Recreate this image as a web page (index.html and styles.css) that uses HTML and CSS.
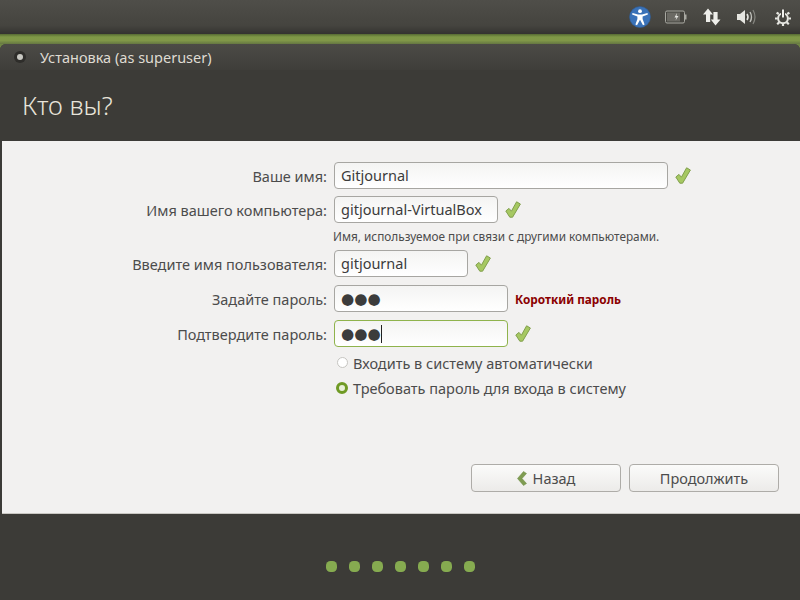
FILE: index.html
```html
<!DOCTYPE html>
<html lang="ru">
<head>
  <meta charset="UTF-8">
  <title>Установка</title>
  <link rel="stylesheet" href="styles.css">
</head>
<body>
  <div class="panel">
    <svg class="tray-icon" width="24" height="24" viewBox="0 0 24 24">
      <circle cx="12" cy="12" r="10.5" fill="#3a72b8" stroke="#2f5a92" stroke-width="0.6"/>
      <circle cx="12" cy="6.2" r="1.9" fill="#fff"/>
      <path d="M4.5 8 L10 9.6 H14 L19.5 8 L19.9 9.4 L14.6 11.4 V14 L16.6 19.6 L15 20.2 L12 14.8 L9 20.2 L7.4 19.6 L9.4 14 V11.4 L4.1 9.4Z" fill="#fff"/>
    </svg>
    <svg class="tray-icon" width="22" height="14" viewBox="0 0 22 14">
      <rect x="0.5" y="1" width="19" height="12" rx="1.5" fill="#45443f" stroke="#a9a9a2"/>
      <rect x="20" y="4.5" width="1.5" height="5" fill="#a9a9a2"/>
      <rect x="2" y="2.5" width="13" height="9" fill="#6b6a64"/>
      <path d="M12 3 L9.5 7.5 H11.5 L10.5 10.5 L13.5 6 H11.5Z" fill="#e8e8e4"/>
    </svg>
    <svg class="tray-icon" width="18" height="18" viewBox="0 0 18 18">
      <path d="M5 0.5 L10 6.5 H7.2 V14 H3 V6.5 H0Z M12.5 17.5 L7.8 11.5 H10.4 V4 H14.6 V11.5 H17.5Z" fill="#eeeeea"/>
    </svg>
    <svg class="tray-icon" width="20" height="16" viewBox="0 0 20 16">
      <path d="M0 5 H3 L8 1 V15 L3 11 H0Z" fill="#e6e6e1"/>
      <path d="M10 5 Q12 8 10 11" fill="none" stroke="#e2e2dd" stroke-width="1.6"/>
      <path d="M13 3 Q16 8 13 13" fill="none" stroke="#c0c0ba" stroke-width="1.4"/>
      <path d="M16 1 Q20 8 16 15" fill="none" stroke="#85857f" stroke-width="1.2"/>
    </svg>
    <svg class="tray-icon" width="16" height="17" viewBox="0 0 16 17">
      <path d="M1.6 3.6 L3.8 5 M14.4 3.6 L12.2 5 M0 9.5 H2.6 M16 9.5 H13.4 M2.2 15.2 L4.2 13.4 M13.8 15.2 L11.8 13.4 M8 17 V14.6" stroke="#e6e6e1" stroke-width="2.2"/>
      <circle cx="8" cy="9.3" r="4.9" fill="none" stroke="#e6e6e1" stroke-width="2"/>
      <path d="M8 0.5 V8.5" stroke="#42413d" stroke-width="4"/>
      <path d="M8 0.5 V8.5" stroke="#f0f0ec" stroke-width="2"/>
    </svg>
  </div>
  <div class="wallpaper"></div>

  <div class="window">
    <div class="titlebar">
      <span class="title-dot"></span>
      <span class="title-text">Установка (as superuser)</span>
    </div>
    <div class="page-head">
      <h1>Кто вы?</h1>
    </div>
    <div class="content">
      <div class="form">
        <label>Ваше имя:</label>
        <div class="field-row">
          <div class="input input-name">Gitjournal</div>
          <svg class="check" viewBox="0 0 16 17"><use href="#tick"/></svg>
        </div>

        <label>Имя вашего компьютера:</label>
        <div class="field-row">
          <div class="input input-host">gitjournal-VirtualBox</div>
          <svg class="check" viewBox="0 0 16 17"><use href="#tick"/></svg>
        </div>

        <span></span>
        <p class="hint">Имя, используемое при связи с другими компьютерами.</p>

        <label>Введите имя пользователя:</label>
        <div class="field-row">
          <div class="input input-user">gitjournal</div>
          <svg class="check" viewBox="0 0 16 17"><use href="#tick"/></svg>
        </div>

        <label class="pass-label">Задайте пароль:</label>
        <div class="field-row pass-row">
          <div class="input input-pass"><span class="dots">●●●</span></div>
          <span class="warn">Короткий пароль</span>
        </div>

        <label class="pass-label">Подтвердите пароль:</label>
        <div class="field-row pass-row">
          <div class="input input-pass focused"><span class="dots">●●●</span><span class="caret"></span></div>
          <svg class="check" viewBox="0 0 16 17"><use href="#tick"/></svg>
        </div>

        <span></span>
        <div class="radios">
          <div class="radio-row"><span class="radio"></span>Входить в систему автоматически</div>
          <div class="radio-row"><span class="radio on"></span>Требовать пароль для входа в систему</div>
        </div>
      </div>

      <div class="buttons">
        <div class="btn">
          <svg class="chevron" width="10" height="15" viewBox="0 0 10 15"><path d="M6.5 0.5 L9.5 2.5 L5 7.5 L9.5 12.5 L6.5 14.5 L0.5 7.5Z" fill="#7f9c52" stroke="#6b8a40" stroke-width="0.5"/></svg>
          Назад
        </div>
        <div class="btn">Продолжить</div>
      </div>
    </div>
    <div class="footer">
      <span class="step"></span><span class="step"></span><span class="step"></span><span class="step"></span><span class="step"></span><span class="step"></span><span class="step"></span>
    </div>
  </div>

  <svg width="0" height="0" class="defs">
    <symbol id="tick" viewBox="0 0 16 17">
      <path d="M0.8 10 L4 7.4 L6.4 10.2 L11.6 0.8 L15.4 3 L7.6 16.2 L4.8 16.2Z" fill="#a6c862" stroke="#819f4c" stroke-width="1"/>
    </symbol>
  </svg>
</body>
</html>
```

FILE: styles.css
```css
html, body {
  margin: 0;
  height: 100%;
}

body {
  width: 800px;
  height: 600px;
  overflow: hidden;
  display: flex;
  flex-direction: column;
  font-family: "Noto Sans", "Open Sans", sans-serif;
  font-size: 14.5px;
  color: #4c4c4c;
  background: #6f8544;
}

.defs {
  display: block;
  height: 0;
}

.panel {
  height: 34px;
  flex: none;
  display: flex;
  align-items: center;
  justify-content: flex-end;
  background: linear-gradient(#4f4e49, #45443f 75%, #343330);
}

.tray-icon {
  display: block;
}

.tray-icon:nth-child(1) { margin-right: 13px; }
.tray-icon:nth-child(2) { margin-right: 16px; }
.tray-icon:nth-child(3) { margin-right: 16px; }
.tray-icon:nth-child(4) { margin-right: 18px; }
.tray-icon:nth-child(5) { margin-right: 9px; }

.wallpaper {
  height: 10px;
  flex: none;
  background: linear-gradient(#566a33, #7f9847 30%, #809748 65%, #657742);
}

.window {
  flex: 1;
  display: flex;
  flex-direction: column;
  min-height: 0;
  border-radius: 6px 6px 0 0;
  overflow: hidden;
  background: #3c3b37;
}

.titlebar {
  height: 26px;
  flex: none;
  display: flex;
  align-items: center;
  padding-left: 17px;
  background: linear-gradient(#4c4b46, #3f3e3a);
  color: #dfdbd2;
}

.title-dot {
  width: 6px;
  height: 6px;
  border-radius: 50%;
  background: #c8c8c2;
  box-shadow: 0 0 0 3px #2e2d2a;
  margin-right: 17px;
}

.page-head {
  height: 71px;
  flex: none;
  display: flex;
  align-items: center;
  padding-left: 22px;
  background: #3c3b37;
}

.page-head h1 {
  margin: 0;
  font-size: 25.7px;
  font-weight: 300;
  color: #e8e4da;
}

.content {
  height: 373px;
  flex: none;
  margin-left: 2px;
  box-sizing: border-box;
  padding-top: 21px;
  background: #f2f1f0;
  border-bottom: 1px solid #c9c7c2;
  position: relative;
}

.form {
  display: grid;
  grid-template-columns: 325px 1fr;
  column-gap: 7px;
  row-gap: 7px;
  align-items: center;
}

.form label {
  text-align: right;
}

.pass-label,
.pass-row {
  margin-top: 1px;
}

.field-row {
  display: flex;
  align-items: center;
}

.input {
  box-sizing: border-box;
  height: 27px;
  line-height: 25px;
  padding-left: 6px;
  background: linear-gradient(#f4f4f3, #ffffff);
  border: 1px solid #a7a6a2;
  border-radius: 4px;
  color: #3c3c3c;
  white-space: nowrap;
}

.input-name { width: 334px; }
.input-host { width: 164px; }
.input-user { width: 134px; }
.input-pass { width: 174px; }

.input.focused {
  border-color: #8fb34c;
}

.dots {
  font-family: "DejaVu Sans", sans-serif;
  font-size: 15.2px;
  color: #3c3c3c;
}

.caret {
  display: inline-block;
  width: 1px;
  height: 18px;
  background: #222;
  vertical-align: -4px;
}

.check {
  width: 16px;
  height: 17px;
  margin-left: 7px;
}

.warn {
  margin-left: 7px;
  font-size: 11.8px;
  font-weight: 700;
  color: #8b0000;
}

.hint {
  margin: -1px 0 0 -1px;
  font-size: 11.8px;
  line-height: 14px;
}

.radios {
  margin-top: -4px;
}

.radio-row {
  display: flex;
  align-items: center;
  height: 25px;
}

.radio {
  box-sizing: border-box;
  width: 11px;
  height: 11px;
  margin: 0 5px 0 3px;
  border-radius: 50%;
  border: 1px solid #c6c5c1;
  background: #fff;
}

.radio.on {
  width: 12px;
  height: 12px;
  margin: 0 5px 0 2px;
  border: 3.5px solid #6f9a24;
  background: #e8f0d8;
}

.buttons {
  position: absolute;
  left: 469px;
  top: 323px;
  display: flex;
  gap: 8px;
}

.btn {
  box-sizing: border-box;
  width: 150px;
  height: 28px;
  display: flex;
  align-items: center;
  justify-content: center;
  gap: 6px;
  background: linear-gradient(#fbfbfa, #ecebe9);
  border: 1px solid #aeaca8;
  border-radius: 4px;
}

.footer {
  flex: 1;
  display: flex;
  justify-content: center;
  align-items: center;
  gap: 12px;
  padding: 18px 0 0 1px;
  background: #3c3b37;
}

.step {
  width: 11px;
  height: 11px;
  border-radius: 4.5px;
  background: #86ab50;
}
```
